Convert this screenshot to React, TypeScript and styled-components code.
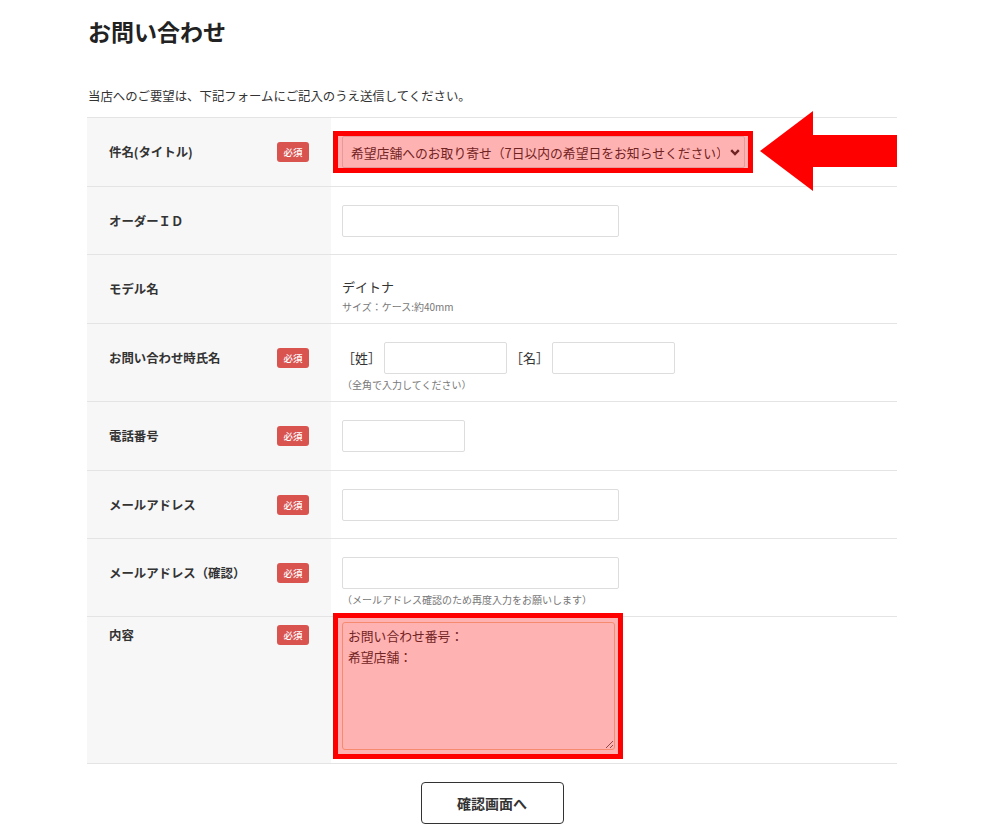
import React from "react";
import styled, { createGlobalStyle } from "styled-components";

const GlobalStyle = createGlobalStyle`
    body {
        margin: 0;
        background: #fff;
        color: #333;
        font-family: "Noto Sans CJK JP", "Noto Sans", sans-serif;
    }
    * {
        box-sizing: border-box;
    }
`;

const Page = styled.div`
    width: 810px;
    margin-left: 87px;
    padding-top: 16px;
`;

const Title = styled.h1`
    margin: 0 0 39px 1px;
    font-size: 23px;
    line-height: 31px;
    font-weight: 700;
    color: #222;
`;

const Lead = styled.p`
    margin: 0 0 11px 1px;
    font-size: 12.4px;
    line-height: 20px;
`;

const FormTable = styled.div`
    border-top: 1px solid #e4e4e4;
`;

const Row = styled.div`
    position: relative;
    display: grid;
    grid-template-columns: 244px 1fr;
    border-bottom: 1px solid #e4e4e4;
`;

const LabelCell = styled.div<{ $tight?: boolean }>`
    display: flex;
    justify-content: space-between;
    align-items: flex-start;
    padding: ${p => (p.$tight ? "8px" : "24px")} 22px 23.5px;
    background: #f7f7f7;
`;

const Label = styled.span`
    font-size: 12.4px;
    line-height: 20px;
    font-weight: 700;
    color: #333;
`;

const Required = styled.span`
    display: inline-flex;
    align-items: center;
    justify-content: center;
    width: 32px;
    height: 20px;
    border-radius: 3px;
    background: #d9534f;
    color: #fff;
    font-size: 9.5px;
    font-weight: 500;
`;

const FieldCell = styled.div<{ $tight?: boolean }>`
    padding: ${p => (p.$tight ? "5px 11px 13px" : "18px 11px 10px")};
`;

const Inline = styled.div`
    display: flex;
    align-items: center;
    gap: 3px;
`;

const Bracket = styled.span`
    font-size: 13px;
    line-height: 20px;
`;

const TextInput = styled.input<{ $w: number }>`
    display: block;
    width: ${p => p.$w}px;
    height: 32px;
    border: 1px solid #ddd;
    border-radius: 2px;
    background: #fff;
    font-family: inherit;
    font-size: 13px;
    padding: 0 8px;
`;

const Value = styled.div`
    margin-top: 4px;
    font-size: 13px;
    line-height: 20px;
`;

const Note = styled.div<{ $gap?: number }>`
    margin-top: ${p => p.$gap ?? 5}px;
    font-size: 10px;
    line-height: 12px;
    color: #777;
`;

const Highlight = styled.div<{ $inset: string }>`
    position: relative;
    display: inline-block;
    vertical-align: top;

    &::after {
        content: "";
        position: absolute;
        inset: ${p => p.$inset};
        border: 5px solid #ff0000;
        background: rgba(255, 0, 0, 0.3);
        pointer-events: none;
    }
`;

const SelectBox = styled.div`
    position: relative;
    width: 403px;
    height: 32px;
`;

const Select = styled.select`
    appearance: none;
    width: 100%;
    height: 100%;
    border: 1px solid #ddd;
    border-radius: 2px;
    background: #fff;
    padding: 0 24px 0 8px;
    font-family: inherit;
    font-size: 12.8px;
    color: #333;
`;

const Chevron = styled.svg`
    position: absolute;
    right: 5px;
    top: 13px;
    pointer-events: none;
`;

const TextArea = styled.textarea`
    display: block;
    width: 273px;
    height: 128px;
    border: 1px solid #f1c6a0;
    border-radius: 3px;
    padding: 2px 5px;
    font-family: inherit;
    font-size: 12.8px;
    line-height: 21px;
    color: #333;
    background: #fff;
    resize: both;
`;

const Arrow = styled.svg`
    position: absolute;
    left: 673px;
    top: -7px;
`;

const Actions = styled.div`
    display: flex;
    justify-content: center;
    padding: 18px 0 12px;
`;

const SubmitButton = styled.button`
    width: 143px;
    height: 42px;
    border: 1px solid #333;
    border-radius: 4px;
    background: #fff;
    font-family: inherit;
    font-size: 14px;
    font-weight: 700;
    color: #333;
    cursor: pointer;
`;

const Field: React.FC<{
    label: string;
    required?: boolean;
    tight?: boolean;
    children: React.ReactNode;
}> = ({ label, required, tight, children }) => (
    <>
        <LabelCell $tight={tight}>
            <Label>{label}</Label>
            {required && <Required>必須</Required>}
        </LabelCell>
        <FieldCell $tight={tight}>{children}</FieldCell>
    </>
);

export default function App() {
    return (
        <Page>
            <GlobalStyle />
            <Title>お問い合わせ</Title>
            <Lead>当店へのご要望は、下記フォームにご記入のうえ送信してください。</Lead>
            <FormTable>
                <Row>
                    <Field label="件名(タイトル)" required>
                        <Highlight $inset="-5px -8px -5px -9px">
                            <SelectBox>
                                <Select defaultValue="order">
                                    <option value="order">
                                        希望店舗へのお取り寄せ（7日以内の希望日をお知らせください）
                                    </option>
                                </Select>
                                <Chevron width="10" height="7" viewBox="0 0 10 7">
                                    <path d="M1.2 1.2 L5 5 L8.8 1.2" fill="none" stroke="#333" strokeWidth="2.4" />
                                </Chevron>
                            </SelectBox>
                        </Highlight>
                    </Field>
                    <Arrow width="137" height="80" viewBox="0 0 137 80">
                        <polygon points="0,40 53,0 53,24 137,24 137,56 53,56 53,80" fill="#ff0000" />
                    </Arrow>
                </Row>
                <Row>
                    <Field label="オーダーＩＤ">
                        <TextInput $w={277} />
                    </Field>
                </Row>
                <Row>
                    <Field label="モデル名">
                        <Value>デイトナ</Value>
                        <Note $gap={4}>サイズ：ケース:約40mm</Note>
                    </Field>
                </Row>
                <Row>
                    <Field label="お問い合わせ時氏名" required>
                        <Inline>
                            <Bracket>［姓］</Bracket>
                            <TextInput $w={123} />
                            <Bracket>［名］</Bracket>
                            <TextInput $w={123} />
                        </Inline>
                        <Note>（全角で入力してください）</Note>
                    </Field>
                </Row>
                <Row>
                    <Field label="電話番号" required>
                        <TextInput $w={123} />
                    </Field>
                </Row>
                <Row>
                    <Field label="メールアドレス" required>
                        <TextInput $w={277} />
                    </Field>
                </Row>
                <Row>
                    <Field label="メールアドレス（確認）" required>
                        <TextInput $w={277} />
                        <Note>（メールアドレス確認のため再度入力をお願いします）</Note>
                    </Field>
                </Row>
                <Row>
                    <Field label="内容" required tight>
                        <Highlight $inset="-9px -8px -9px -9px">
                            <TextArea defaultValue={"お問い合わせ番号：\n希望店舗："} />
                        </Highlight>
                    </Field>
                </Row>
            </FormTable>
            <Actions>
                <SubmitButton type="button">確認画面へ</SubmitButton>
            </Actions>
        </Page>
    );
}
